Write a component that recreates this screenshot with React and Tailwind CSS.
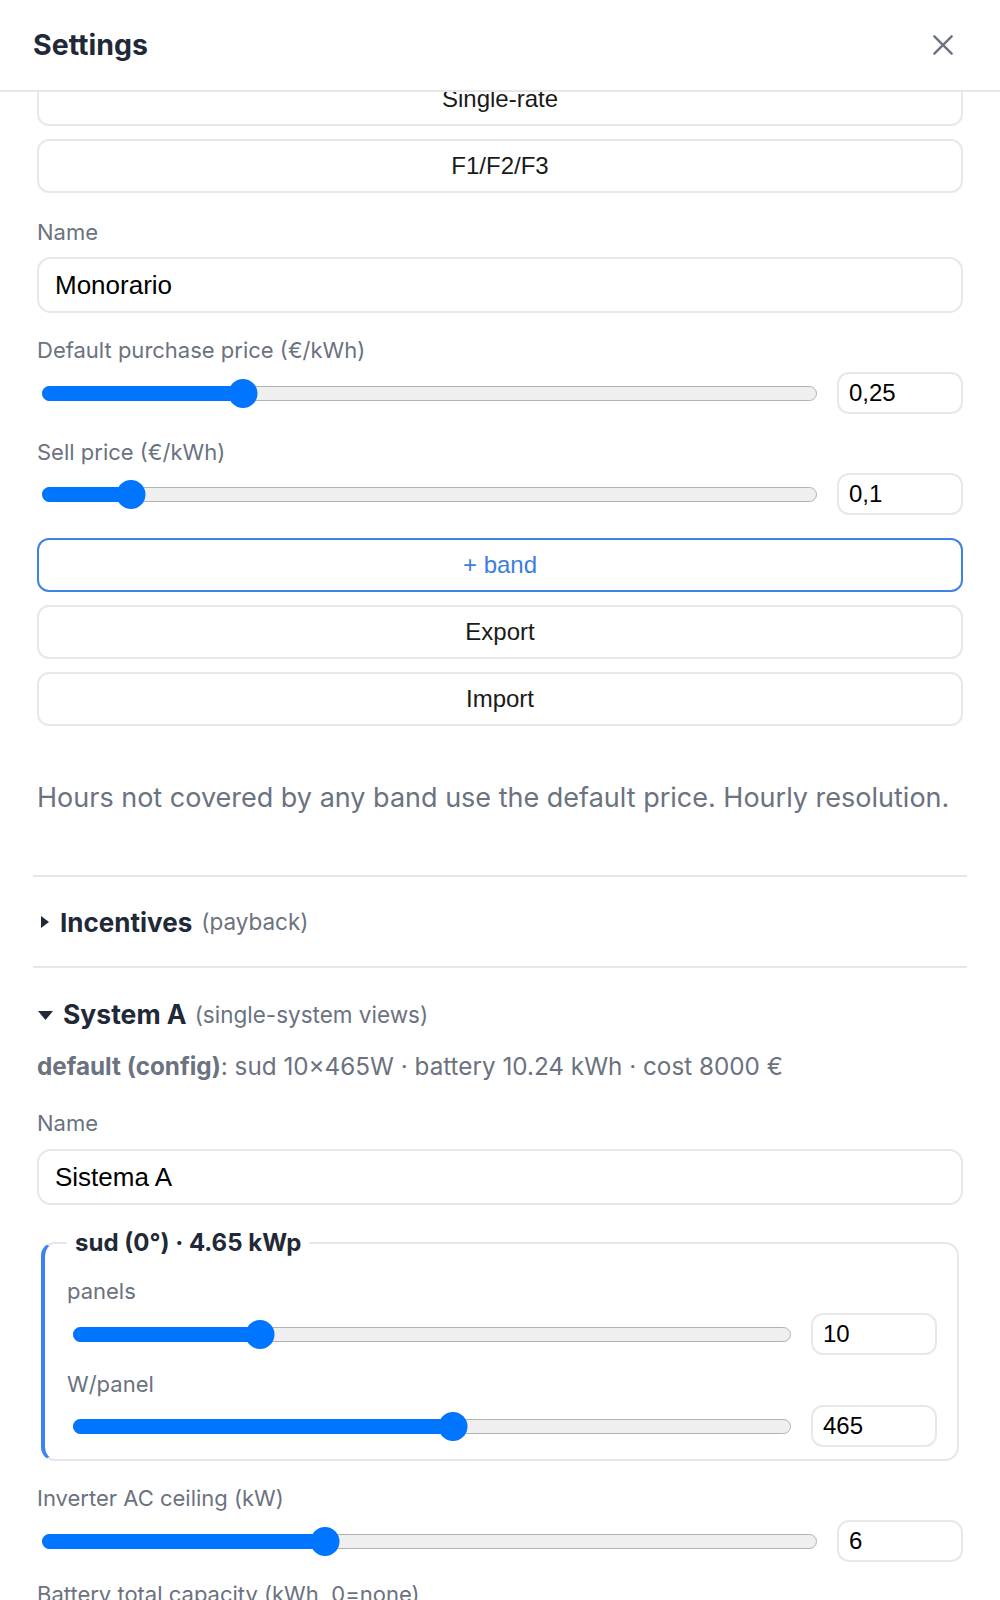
import React from "react";

const ui = { fontFamily: "Inter, 'Noto Sans', sans-serif" };
const native = { fontFamily: "'Liberation Sans', Arial, sans-serif" };

function Slider({ pct }) {
  const pos = `calc(14.5px + (100% - 29px) * ${pct / 100})`;
  return (
    <div className="relative flex-1 h-[29px] flex items-center">
      <div className="w-full h-[15px] rounded-full bg-[#efefef] border-[1.5px] border-[#b2b2b2]" />
      <div className="absolute left-0 h-[15px] rounded-full bg-[#0075ff]" style={{ width: pos }} />
      <div
        className="absolute w-[29px] h-[29px] rounded-full bg-[#0075ff] -translate-x-1/2"
        style={{ left: pos }}
      />
    </div>
  );
}

function SliderRow({ pct, value, inset = "pl-[5px]", className = "" }) {
  return (
    <div className={`flex items-center gap-[20px] ${className}`}>
      <div className={`flex-1 flex ${inset}`}>
        <Slider pct={pct} />
      </div>
      <div
        className="w-[126px] h-[42px] border-2 border-[#e8e8e8] rounded-[12px] pl-[10px] flex items-center text-[24px] text-black"
        style={native}
      >
        {value}
      </div>
    </div>
  );
}

function Btn({ children, className = "", blue = false }) {
  return (
    <div
      className={`h-[54px] rounded-[12px] flex items-center justify-center text-[24px] ${
        blue ? "border-2 border-[#3f82e4] text-[#3a7ee0]" : "border-2 border-[#e8e8e8] text-[#1a1a1a]"
      } ${className}`}
      style={native}
    >
      {children}
    </div>
  );
}

function Label({ children, className = "" }) {
  return (
    <div className={`text-[22px] leading-[26px] text-[#6b7280] ${className}`} style={ui}>
      {children}
    </div>
  );
}

function TextBox({ value, className = "" }) {
  return (
    <div
      className={`h-[56px] border-2 border-[#e8e8e8] rounded-[14px] pl-[16px] flex items-center text-[26px] text-black ${className}`}
      style={native}
    >
      {value}
    </div>
  );
}

export default function App() {
  return (
    <div className="w-[1000px] h-[1600px] bg-white flex flex-col overflow-hidden">
      {/* header */}
      <div className="h-[92px] shrink-0 flex items-center justify-between pl-[33px] pr-[44px] border-b-2 border-[#e5e7eb] relative z-10 bg-white">
        <h1 className="text-[28.5px] font-bold text-[#1f2937]" style={ui}>
          Settings
        </h1>
        <svg width="26" height="26" viewBox="0 0 24 24" fill="none" stroke="#6b7280" strokeWidth="2.2" strokeLinecap="round">
          <path d="M4 4L20 20M20 4L4 20" />
        </svg>
      </div>

      <div className="flex-1 overflow-hidden">
        <div className="-mt-[20px] px-[37px]">
          <Btn>Single-rate</Btn>
          <Btn className="mt-[13px]">F1/F2/F3</Btn>

          <Label className="mt-[26px]">Name</Label>
          <TextBox value="Monorario" className="mt-[12px]" />

          <Label className="mt-[24px]">Default purchase price (€/kWh)</Label>
          <SliderRow pct={25} value="0,25" className="mt-[9px]" />

          <Label className="mt-[25px]">Sell price (€/kWh)</Label>
          <SliderRow pct={10} value="0,1" className="mt-[8px]" />

          <Btn blue className="mt-[23px]">+ band</Btn>
          <Btn className="mt-[13px]">Export</Btn>
          <Btn className="mt-[13px]">Import</Btn>

          <p className="mt-[56px] text-[27px] leading-[31px] text-[#6b7280]" style={ui}>
            Hours not covered by any band use the default price. Hourly resolution.
          </p>

          <div className="-mx-[4px] mt-[62px] border-t-2 border-[#e5e7eb]" />

          <div className="mt-[29px] h-[32px] flex items-center" style={ui}>
            <svg width="8" height="12" viewBox="0 0 8 12" className="ml-[4px] mr-[11px]">
              <path d="M0 0L8 6L0 12Z" fill="#1f2937" />
            </svg>
            <span className="text-[26px] font-bold text-[#1f2937]">Incentives</span>
            <span className="ml-[9px] text-[22.5px] text-[#6b7280]">(payback)</span>
          </div>

          <div className="-mx-[4px] mt-[28px] border-t-2 border-[#e5e7eb]" />

          <div className="mt-[31px] h-[32px] flex items-center" style={ui}>
            <svg width="15" height="9" viewBox="0 0 15 9" className="ml-[1px] mr-[10px]">
              <path d="M0 0L15 0L7.5 9Z" fill="#1f2937" />
            </svg>
            <span className="text-[26.5px] font-bold text-[#1f2937]">System A</span>
            <span className="ml-[8px] text-[22.5px] text-[#6b7280]">(single-system views)</span>
          </div>

          <div className="mt-[22px] text-[24.25px] leading-[28px] text-[#6b7280]" style={ui}>
            <span className="font-bold">default (config)</span>: sud 10×465W · battery 10.24 kWh · cost 8000 €
          </div>

          <Label className="mt-[29px]">Name</Label>
          <TextBox value="Sistema A" className="mt-[13px]" />

          <fieldset className="mt-[24px] mx-[4px] border-2 border-[#e5e7eb] border-l-4 border-l-[#3b82f6] rounded-[14px] pl-[22px] pr-[20px] pb-[12px]">
            <legend className="px-[8px] text-[24px] leading-[28px] font-bold text-[#1f2937]" style={ui}>
              sud (0°) · 4.65 kWp
            </legend>
            <Label className="mt-[21px]">panels</Label>
            <SliderRow pct={25} value="10" inset="pl-[6px]" className="mt-[9px]" />
            <Label className="mt-[16px]">W/panel</Label>
            <SliderRow pct={53} value="465" inset="pl-[6px]" className="mt-[8px]" />
          </fieldset>

          <Label className="mt-[24px]">Inverter AC ceiling (kW)</Label>
          <SliderRow pct={36} value="6" className="mt-[9px]" />

          <Label className="mt-[19px]">Battery total capacity (kWh, 0=none)</Label>
        </div>
      </div>
    </div>
  );
}
